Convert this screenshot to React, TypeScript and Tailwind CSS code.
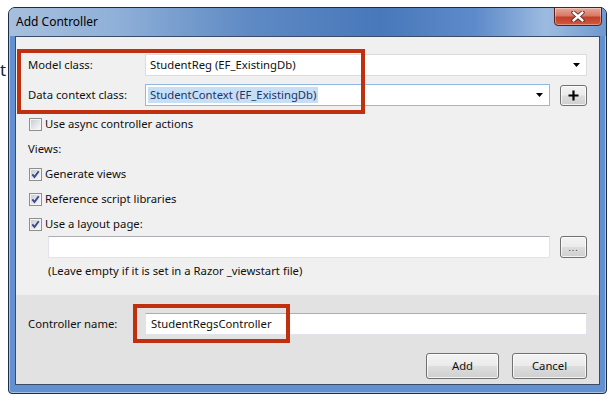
import type { ReactNode } from 'react';

// Win7-style checkbox drawn as a tiny svg
function Check({ checked }: { checked?: boolean }) {
  return (
    <svg width="13" height="13" viewBox="0 0 13 13" className="shrink-0">
      <defs>
        <linearGradient id="cbFill" x1="0" y1="0" x2="1" y2="1">
          <stop offset="0" stopColor="#c9cdd3" />
          <stop offset="1" stopColor="#f8f8f8" />
        </linearGradient>
      </defs>
      <rect x="0.5" y="0.5" width="12" height="12" fill="#f4f4f4" stroke="#8e8f8f" />
      <rect x="2" y="2" width="9" height="9" fill="url(#cbFill)" />
      {checked && <path d="M3.3 6.3 L5.5 9 L9.7 3.3" fill="none" stroke="#34498b" strokeWidth="1.9" />}
    </svg>
  );
}

function Arrow() {
  return (
    <svg width="7" height="4" viewBox="0 0 7 4" className="shrink-0">
      <path d="M0 0 H7 L3.5 4 Z" fill="#000" />
    </svg>
  );
}

const winBtn =
  'flex items-center justify-center rounded-[3px] border border-[#707070] bg-[linear-gradient(180deg,#f3f3f3_0%,#ebebeb_48%,#dddddd_52%,#cfcfcf_100%)] shadow-[inset_0_0_0_1px_rgba(255,255,255,0.75)]';

function CheckRow({ checked, children }: { checked?: boolean; children: ReactNode }) {
  return (
    <div className="flex items-center h-[25px] pl-[1px] gap-[3px]">
      <Check checked={checked} />
      <span>{children}</span>
    </div>
  );
}

export default function App() {
  return (
    <div className="relative w-[609px] h-[396px] overflow-hidden bg-white pt-[7px] font-['Noto_Sans',sans-serif] text-[11.3px] text-[#111]">
      {/* edge of the page text behind the dialog */}
      <span className="absolute left-[0px] top-[57px] text-[17px] text-[#222]">t</span>

      <div className="ml-[8px] w-[599px] h-[387px] rounded-t-[7px] rounded-b-[4px] border border-[#1d2d48] bg-[#6391cf] shadow-[inset_0_0_0_1px_rgba(255,255,255,0.45)] px-[6px] pb-[8px] flex flex-col">
        {/* title bar */}
        <div className="-mx-[6px] h-[28px] rounded-t-[6px] pl-[7px] pr-[4px] flex justify-between bg-[linear-gradient(90deg,#a7bfdd_0%,#8fb0d8_18%,#5f8ac4_40%,#4878ba_62%,#5d8aca_78%,#9cbbe0_90%,#6e99d0_100%)]">
          <span className="self-center text-[12px] text-black">Add Controller</span>
          <div className="-mt-[1px] w-[48px] h-[19px] rounded-b-[4px] border border-[#5a1f16] bg-[linear-gradient(180deg,#e8a89b_0%,#d77a66_45%,#c0402a_55%,#d4583f_100%)] shadow-[inset_0_0_0_1px_rgba(255,255,255,0.35)] flex items-center justify-center">
            <svg width="14" height="11" viewBox="0 0 14 11">
              <path d="M2.5 1.5 L11.5 9.5 M11.5 1.5 L2.5 9.5" stroke="#4d2a26" strokeWidth="4.2" strokeLinecap="round" />
              <path d="M2.5 1.5 L11.5 9.5 M11.5 1.5 L2.5 9.5" stroke="#fff" strokeWidth="2.4" strokeLinecap="round" />
            </svg>
          </div>
        </div>

        {/* client area */}
        <div className="relative flex-1 border border-[#3a4c69] flex flex-col">
          <div className="h-[258px] bg-[#f0f0f0] pt-[17px] pl-[12px] pr-[12px] flex flex-col">
            <div className="flex items-center h-[22px]">
              <span className="w-[117px] shrink-0">Model class:</span>
              <div className="flex-1 h-full bg-white border border-[#dcdcdc] flex items-center justify-between pl-[4px] pr-[6px]">
                <span>StudentReg (EF_ExistingDb)</span>
                <Arrow />
              </div>
            </div>
            <div className="flex items-center h-[22px] mt-[8px]">
              <span className="w-[117px] shrink-0">Data context class:</span>
              <div className="flex-1 h-full bg-white border border-[#8fb8e2] flex items-center justify-between pl-[2px] pr-[6px]">
                <span className="bg-[#c6dff7] text-[#1b3566] px-[2px]">StudentContext (EF_ExistingDb)</span>
                <Arrow />
              </div>
              <button className={`${winBtn} ml-[10px] w-[27px] h-[21px]`}>
                <svg width="11" height="11" viewBox="0 0 11 11">
                  <path d="M5.5 0.5 V10.5 M0.5 5.5 H10.5" stroke="#000" strokeWidth="2.2" />
                </svg>
              </button>
            </div>

            <div className="mt-[6px] flex flex-col">
              <CheckRow>Use async controller actions</CheckRow>
              <div className="flex items-center h-[25px]">Views:</div>
              <CheckRow checked>Generate views</CheckRow>
              <CheckRow checked>Reference script libraries</CheckRow>
              <CheckRow checked>Use a layout page:</CheckRow>
            </div>

            <div className="-mt-[1px] ml-[20px] flex items-center h-[22px]">
              <div className="flex-1 h-full bg-white border border-[#e2e3ea] border-t-[#abadb3]" />
              <button className={`${winBtn} ml-[10px] w-[27px] h-[22px] items-end pb-[5px]`}>
                <span className="text-[9px] leading-none tracking-[1px] text-[#333]">...</span>
              </button>
            </div>
            <div className="ml-[20px] mt-[5px] h-[16px] flex items-center">
              (Leave empty if it is set in a Razor _viewstart file)
            </div>
          </div>

          <div className="flex-1 bg-[#e2e2e2] pt-[18px] pl-[12px] pr-[12px] flex flex-col">
            <div className="flex items-center h-[22px]">
              <span className="w-[117px] shrink-0">Controller name:</span>
              <div className="flex-1 h-full bg-white border border-[#e2e3ea] border-t-[#abadb3] flex items-center pl-[5px]">
                StudentRegsController
              </div>
            </div>
            <div className="mt-[18px] flex justify-end gap-[13px]">
              <button className={`${winBtn} w-[73px] h-[26px] border-[#3c9fd8] shadow-[inset_0_0_0_1px_#62d3f5]`}>Add</button>
              <button className={`${winBtn} w-[75px] h-[26px]`}>Cancel</button>
            </div>
          </div>

          {/* red annotation boxes drawn over the dialog */}
          <div className="absolute left-[1px] top-[12px] w-[348px] h-[65px] border-[4px] border-[#c0300e] pointer-events-none" />
          <div className="absolute left-[117px] top-[267px] w-[157px] h-[39px] border-[4px] border-[#c0300e] pointer-events-none" />
        </div>
      </div>
    </div>
  );
}
